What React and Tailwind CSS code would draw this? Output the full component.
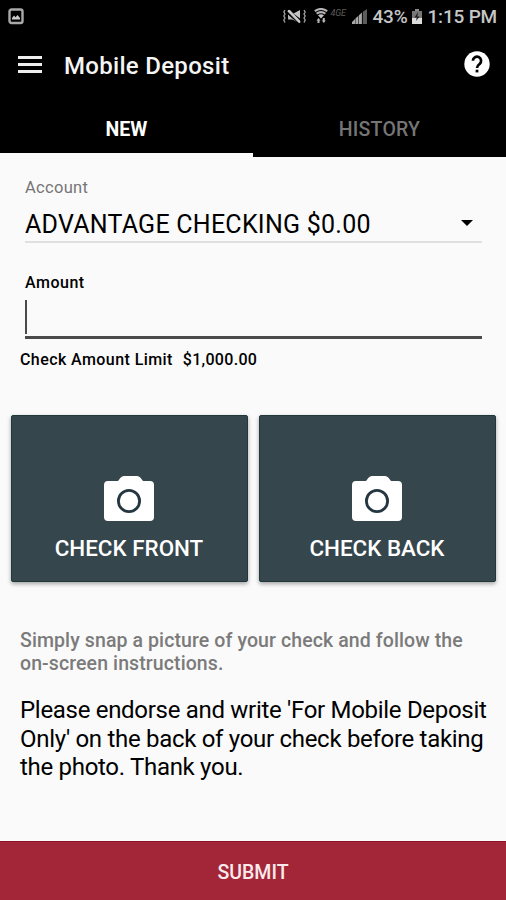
const VibrateOffIcon = () => (
  <svg width="23" height="15" viewBox="0 0 23 15" fill="none" className="shrink-0">
    <path d="M2 1L.8 3 2 5 .8 7 2 9 .8 11 2 13.5M21 1l1.2 2L21 5l1.2 2L21 9l1.2 2-1.2 2.5" stroke="#a3a3a3" strokeWidth="1.3" />
    <path d="M5 1h2l10 10.500V13.500h-1.500L5 2.500zM5 5.500l5.500 5.500L9 10H5zM10.500 4.500L17 1v8.500z" fill="#c4c4c4" />
    <path d="M5 1.500l12 12" stroke="#c9c9c9" strokeWidth="2" />
    <path d="M5 6v4.500h4.500L14 13z" fill="#b0b0b0" />
  </svg>
);

const WifiIcon = () => (
  <svg width="14" height="16" viewBox="0 0 14 16" fill="none" className="shrink-0">
    <path d="M.8 3.2Q7-1.2 13.2 3.2M2.6 5.6Q7 2.6 11.4 5.6" stroke="#b5b5b5" strokeWidth="2.1" />
    <path d="M4 7.300q3-2 6 0L7 10.500z" fill="#c4c4c4" />
    <path d="M2.500 12.500L4.500 10l2 2.500h-1V15h-2v-2.500zM7.800 12.500h1V10h2v2.500h1L9.800 15z" fill="#b5b5b5" />
  </svg>
);

const SignalIcon = () => (
  <svg width="15" height="15" viewBox="0 0 15 15" className="shrink-0">
    <path d="M0 15v-2l3-3v5zM3.400 15V9.500l3-2.800V15z" fill="#a8a8a8" />
    <path d="M6.900 15V6.200l3-2.800V15z" fill="#a8a8a8" />
    <path d="M10.800 15V2.800L15 0v15z" fill="#5c5c5c" />
  </svg>
);

const BatteryIcon = () => (
  <svg width="10" height="15" viewBox="0 0 10 15" className="shrink-0">
    <path d="M3 0h4v2H3z" fill="#8a8a8a" />
    <path d="M0 2h10v7H0z" fill="#777" />
    <path d="M0 9h10v6H0z" fill="#dcdcdc" />
    <path d="M6 3L2.500 8.500h2.300L4 12l3.700-4.500H5.400z" fill="#222" />
  </svg>
);

const CameraIcon = () => (
  <svg width="50" height="45" viewBox="0 0 50 45" className="block">
    <path
      d="M4 5h10l2.500-3.200Q18 0 20 0h13q2 0 3.500 1.800L39 5h7q4 0 4 4v32q0 4-4 4H4q-4 0-4-4V9q0-4 4-4z"
      fill="#fff"
    />
    <circle cx="25" cy="25" r="10.600" fill="#fff" stroke="#253740" strokeWidth="2.800" />
  </svg>
);

const StatusBar = () => (
  <div className="flex h-8 items-center justify-between pl-2 pr-[9px] text-[#c6c6c6]">
    <svg width="16" height="17" viewBox="0 0 16 17">
      <rect x="1.500" y="1.500" width="13" height="13.500" rx="2" fill="none" stroke="#a9a9a9" strokeWidth="2.400" />
      <path d="M4 11.500V10l2-2.500 1.500 1.700L9.500 7l2.500 3v1.500z" fill="#c9c9c9" />
    </svg>
    <div className="flex items-center">
      <VibrateOffIcon />
      <div className="ml-2">
        <WifiIcon />
      </div>
      <span className="mb-1.5 ml-[3px] w-[18px] text-[9px] italic leading-none tracking-tight text-[#5e5e5e]">4GE</span>
      <div className="ml-[3px]">
        <SignalIcon />
      </div>
      <span className="ml-[6px] text-[19px] font-medium leading-none tracking-[-0.2px]">43%</span>
      <div className="ml-1">
        <BatteryIcon />
      </div>
      <span className="ml-[6px] text-[19px] font-medium leading-none tracking-[-0.2px]">1:15 PM</span>
    </div>
  </div>
);

const AppBar = () => (
  <div className="flex h-[66px] items-center pl-[18px] pr-4">
    <button type="button" aria-label="Menu" className="mb-0.5 flex w-6 flex-col gap-1">
      <span className="h-[3px] w-full bg-[#eee]" />
      <span className="h-[3px] w-full bg-[#eee]" />
      <span className="h-[3px] w-full bg-[#eee]" />
    </button>
    <h1 className="ml-[22px] flex-1 pt-0.5 text-2xl font-medium tracking-[0.3px] text-[#f5f5f5]">Mobile Deposit</h1>
    <button type="button" aria-label="Help" className="mb-0.5">
      <svg width="26" height="26" viewBox="0 0 26 26" fill="none">
        <circle cx="13" cy="13" r="12.700" fill="#fff" />
        <path d="M8.900 9.800a4.100 4.100 0 1 1 6.800 3.100C14 14.200 13 14.900 13 16.900" stroke="#000" strokeWidth="2.700" />
        <path d="M11.600 18.700h2.800v2.700h-2.800z" fill="#000" />
      </svg>
    </button>
  </div>
);

const Tabs = () => (
  <div className="grid h-[59px] grid-cols-2 text-[19.5px]">
    <button type="button" className="border-b-4 border-[#fafafa] pt-[9px] font-bold text-white">
      NEW
    </button>
    <button type="button" className="border-b-4 border-black pt-[9px] font-medium tracking-[0.2px] text-[#757575]">
      HISTORY
    </button>
  </div>
);

const PhotoButton = ({ label }) => (
  <button
    type="button"
    className="flex h-[167px] flex-1 flex-col items-center rounded-[2px] border border-[#20383b] bg-[#35464d] pr-px pt-[60px] text-white shadow-[0_2px_4px_rgba(0,0,0,0.35)]"
  >
    <CameraIcon />
    <span className="mt-[13px] text-[22.4px] font-medium leading-[28px]">{label}</span>
  </button>
);

const App = () => {
  return (
    <div className="flex h-[900px] w-[506px] flex-col overflow-hidden bg-[#fafafa] font-[Roboto,sans-serif] text-black">
      <header className="bg-black">
        <StatusBar />
        <AppBar />
        <Tabs />
      </header>

      <main className="flex-1">
        <div className="pl-[25px] pr-6 pt-5">
          <p className="text-[16.5px] leading-[22px] tracking-[0.3px] text-[#757575]">Account</p>
          <div className="mt-2 flex h-[36px] items-center justify-between border-b-2 border-[#e0e0e0] pr-[9px]">
            <span className="pt-0.5 text-[25px] tracking-[0.25px]">ADVANTAGE CHECKING $0.00</span>
            <svg width="12" height="6" viewBox="0 0 12 6" className="mb-0.5">
              <path d="M0 0h12L6 6z" fill="#000" />
            </svg>
          </div>
          <p className="mt-[29px] text-[16px] font-medium leading-[22px] tracking-[0.5px]">Amount</p>
          <div className="mt-[6px] h-[39px] border-b-[3px] border-[#4a4a4a]">
            <div className="h-[34px] w-0.5 bg-[#4a4a4a]" />
          </div>
        </div>
        <p className="mt-2.5 flex gap-2.5 px-5 text-[16px] font-medium leading-[22px] tracking-[0.42px]">
          <span>Check Amount Limit</span>
          <span className="tracking-[0.3px]">$1,000.00</span>
        </p>

        <div className="mt-11 flex gap-[11px] pl-[11px] pr-2.5">
          <PhotoButton label="CHECK FRONT" />
          <PhotoButton label="CHECK BACK" />
        </div>

        <div className="px-5 pt-[47px]">
          <p className="whitespace-nowrap text-[19.5px] font-medium leading-[23px] tracking-[0.1px] text-[#7b7b7b]">
            Simply snap a picture of your check and follow the
            <br />
            on-screen instructions.
          </p>
          <p className="mt-[21px] whitespace-nowrap text-[24px] leading-[28.5px] tracking-[-0.3px]">
            Please endorse and write 'For Mobile Deposit
            <br />
            Only' on the back of your check before taking
            <br />
            the photo. Thank you.
          </p>
        </div>
      </main>

      <button type="button" className="h-[59px] border-t border-[#8c1028] bg-[#a32638] pt-[3px] text-[19.5px] font-medium text-[#fbeaec]">
        SUBMIT
      </button>
    </div>
  );
};

export default App;
